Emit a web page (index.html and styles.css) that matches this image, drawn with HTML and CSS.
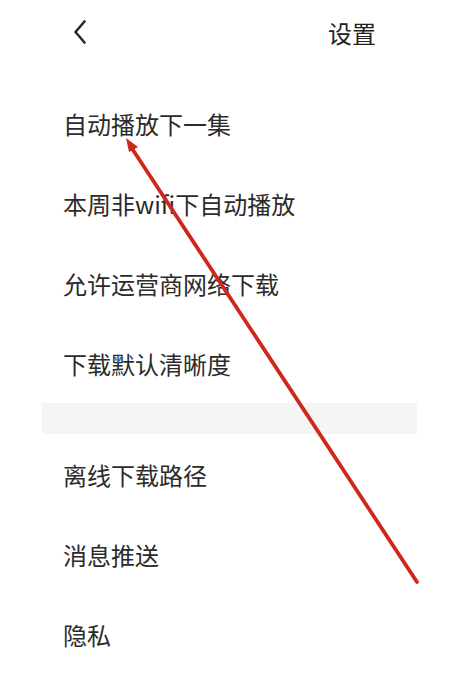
FILE: index.html
```html
<!DOCTYPE html>
<html lang="zh-CN">
<head>
<meta charset="utf-8">
<title>设置</title>
<link rel="stylesheet" href="styles.css">
</head>
<body>
<div class="page">
  <header class="header">
    <span class="back">
      <svg width="14" height="24" viewBox="0 0 14 24"><path d="M11.5 1.5 L2.5 12 L11.5 22.5" fill="none" stroke="#2b2b2b" stroke-width="2.6" stroke-linecap="round" stroke-linejoin="round"/></svg>
    </span>
    <h1 class="title">设置</h1>
  </header>
  <ul class="list">
    <li class="item">自动播放下一集</li>
    <li class="item">本周非wifi下自动播放</li>
    <li class="item">允许运营商网络下载</li>
    <li class="item">下载默认清晰度</li>
  </ul>
  <div class="divider"></div>
  <ul class="list">
    <li class="item">离线下载路径</li>
    <li class="item">消息推送</li>
    <li class="item">隐私</li>
    <li class="item"></li>
  </ul>
  <svg class="arrow" width="472" height="699" viewBox="0 0 472 699">
    <line x1="417" y1="582" x2="131" y2="147" stroke="#d0271c" stroke-width="3.8" stroke-linecap="round"/>
    <polygon points="126,138 138,147 129,152" fill="#d0271c"/>
  </svg>
</div>
</body>
</html>
```

FILE: styles.css
```css
html, body {
  margin: 0;
  padding: 0;
  background: #ffffff;
}
body {
  font-family: "Noto Sans CJK SC", "Noto Sans", sans-serif;
  color: #2b2b2b;
}
.page {
  position: relative;
  width: 472px;
  height: 699px;
  overflow: hidden;
}
.header {
  display: flex;
  align-items: center;
  justify-content: space-between;
  height: 64px;
  padding: 0 96px 0 73px;
}
.back {
  display: flex;
  align-items: center;
}
.title {
  margin: 0;
  font-size: 24px;
  font-weight: 400;
  color: #222222;
}
.list {
  list-style: none;
  margin: 0;
  padding: 0;
}
.header + .list {
  margin-top: 19px;
}
.item {
  height: 80px;
  display: flex;
  align-items: center;
  padding-left: 63px;
  font-size: 24px;
  color: #2b2b2b;
}
.divider {
  height: 31px;
  margin: 0 55px 0 42px;
  background: #f5f5f5;
}
.arrow {
  position: absolute;
  left: 0;
  top: 0;
}
```
